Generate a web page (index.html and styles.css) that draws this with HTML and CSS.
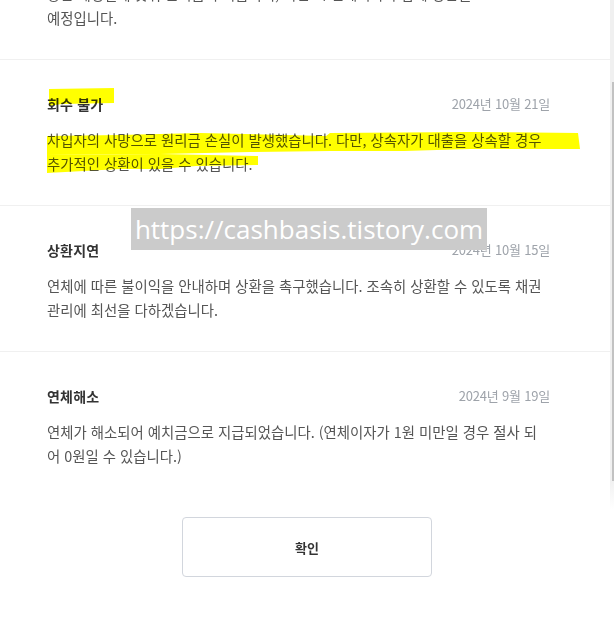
FILE: index.html
```html
<!DOCTYPE html>
<html lang="ko">
<head>
<meta charset="utf-8">
<title>연체 안내</title>
<link rel="stylesheet" href="styles.css">
</head>
<body>
<div class="sheet">
  <div class="item item-partial">
    <p class="desc">상환 예정일에 맞춰 원리금이 지급되며, 지연 시 연체이자가 함께 정산될<br>예정입니다.</p>
  </div>

  <div class="item item-marked">
    <div class="head">
      <h3 class="title">회수 불가</h3>
      <span class="date">2024년 10월 21일</span>
    </div>
    <p class="desc">차입자의 사망으로 원리금 손실이 발생했습니다. 다만, 상속자가 대출을 상속할 경우 추가적인 상환이 있을 수 있습니다.</p>
    <svg class="marker" viewBox="0 0 614 146" width="614" height="146" aria-hidden="true">
      <polygon points="49,29 114,28 114,43 62,44 49,46" />
      <polygon points="47,76 120,75 200,73 326,76 330,73 470,72 578,73 580,89 470,89 404,91 330,91 250,92 160,94 47,95" />
      <polygon points="47,95 160,94 258,96 258,105 196,106 160,109 120,109 47,113" />
    </svg>
  </div>

  <div class="item">
    <div class="head">
      <h3 class="title">상환지연</h3>
      <span class="date">2024년 10월 15일</span>
    </div>
    <p class="desc">연체에 따른 불이익을 안내하며 상환을 촉구했습니다. 조속히 상환할 수 있도록 채권 관리에 최선을 다하겠습니다.</p>
  </div>

  <div class="item item-last">
    <div class="head">
      <h3 class="title">연체해소</h3>
      <span class="date">2024년 9월 19일</span>
    </div>
    <p class="desc">연체가 해소되어 예치금으로 지급되었습니다. (연체이자가 1원 미만일 경우 절사 되어 0원일 수 있습니다.)</p>
  </div>

  <div class="actions">
    <button class="btn-confirm" type="button">확인</button>
  </div>
</div>

<div class="watermark">https://cashbasis.tistory.com</div>
<div class="scrollbar"><div class="thumb"></div></div>
</body>
</html>
```

FILE: styles.css
```css
* {
  box-sizing: border-box;
}

html, body {
  margin: 0;
  padding: 0;
  background: #ffffff;
}

body {
  width: 614px;
  height: 620px;
  overflow: hidden;
  position: relative;
  font-family: "Noto Sans CJK KR", "Noto Sans", sans-serif;
  color: #333333;
}

.sheet {
  display: flex;
  flex-direction: column;
  margin-top: -18px;
}

.item {
  position: relative;
  padding: 32px 64px 29px 47px;
  border-bottom: 1px solid #f0f0f0;
  display: flex;
  flex-direction: column;
  gap: 12px;
}

.item-partial {
  padding-top: 0;
}

.item-last {
  border-bottom: none;
  padding-bottom: 30px;
}

.head {
  display: flex;
  justify-content: space-between;
  align-items: center;
  height: 24px;
}

.title {
  margin: 0;
  font-size: 14px;
  font-weight: 700;
  line-height: 24px;
  letter-spacing: 0.2px;
  color: #333333;
}

.date {
  font-size: 13px;
  line-height: 24px;
  letter-spacing: -0.2px;
  color: #9ea3aa;
}

.desc {
  margin: 0;
  font-size: 14.4px;
  line-height: 24px;
  letter-spacing: 0;
  color: #555555;
}

.marker {
  position: absolute;
  left: 0;
  top: 0;
  fill: #ffff00;
  mix-blend-mode: multiply;
  pointer-events: none;
}

.actions {
  display: flex;
  justify-content: center;
  padding-top: 19px;
}

.btn-confirm {
  width: 250px;
  height: 60px;
  background: #ffffff;
  border: 1px solid #d2d6dd;
  border-radius: 4px;
  font-family: "Noto Sans CJK KR", "Noto Sans", sans-serif;
  font-size: 13px;
  font-weight: 700;
  color: #333333;
}

.watermark {
  position: absolute;
  left: 131px;
  top: 208px;
  width: 356px;
  height: 42px;
  background: #cbcbcb;
  color: #ffffff;
  font-family: "Open Sans", "Noto Sans", sans-serif;
  font-size: 26px;
  line-height: 42px;
  text-align: center;
  white-space: nowrap;
}

.scrollbar {
  position: absolute;
  right: 0;
  top: 0;
  width: 4px;
  height: 510px;
  background: linear-gradient(to bottom, #f0f0f0 0, #f0f0f0 480px, #ffffff 510px);
}

.thumb {
  margin-top: 82px;
  margin-left: 2px;
  width: 2px;
  height: 399px;
  background: #c2c2c2;
}
```
